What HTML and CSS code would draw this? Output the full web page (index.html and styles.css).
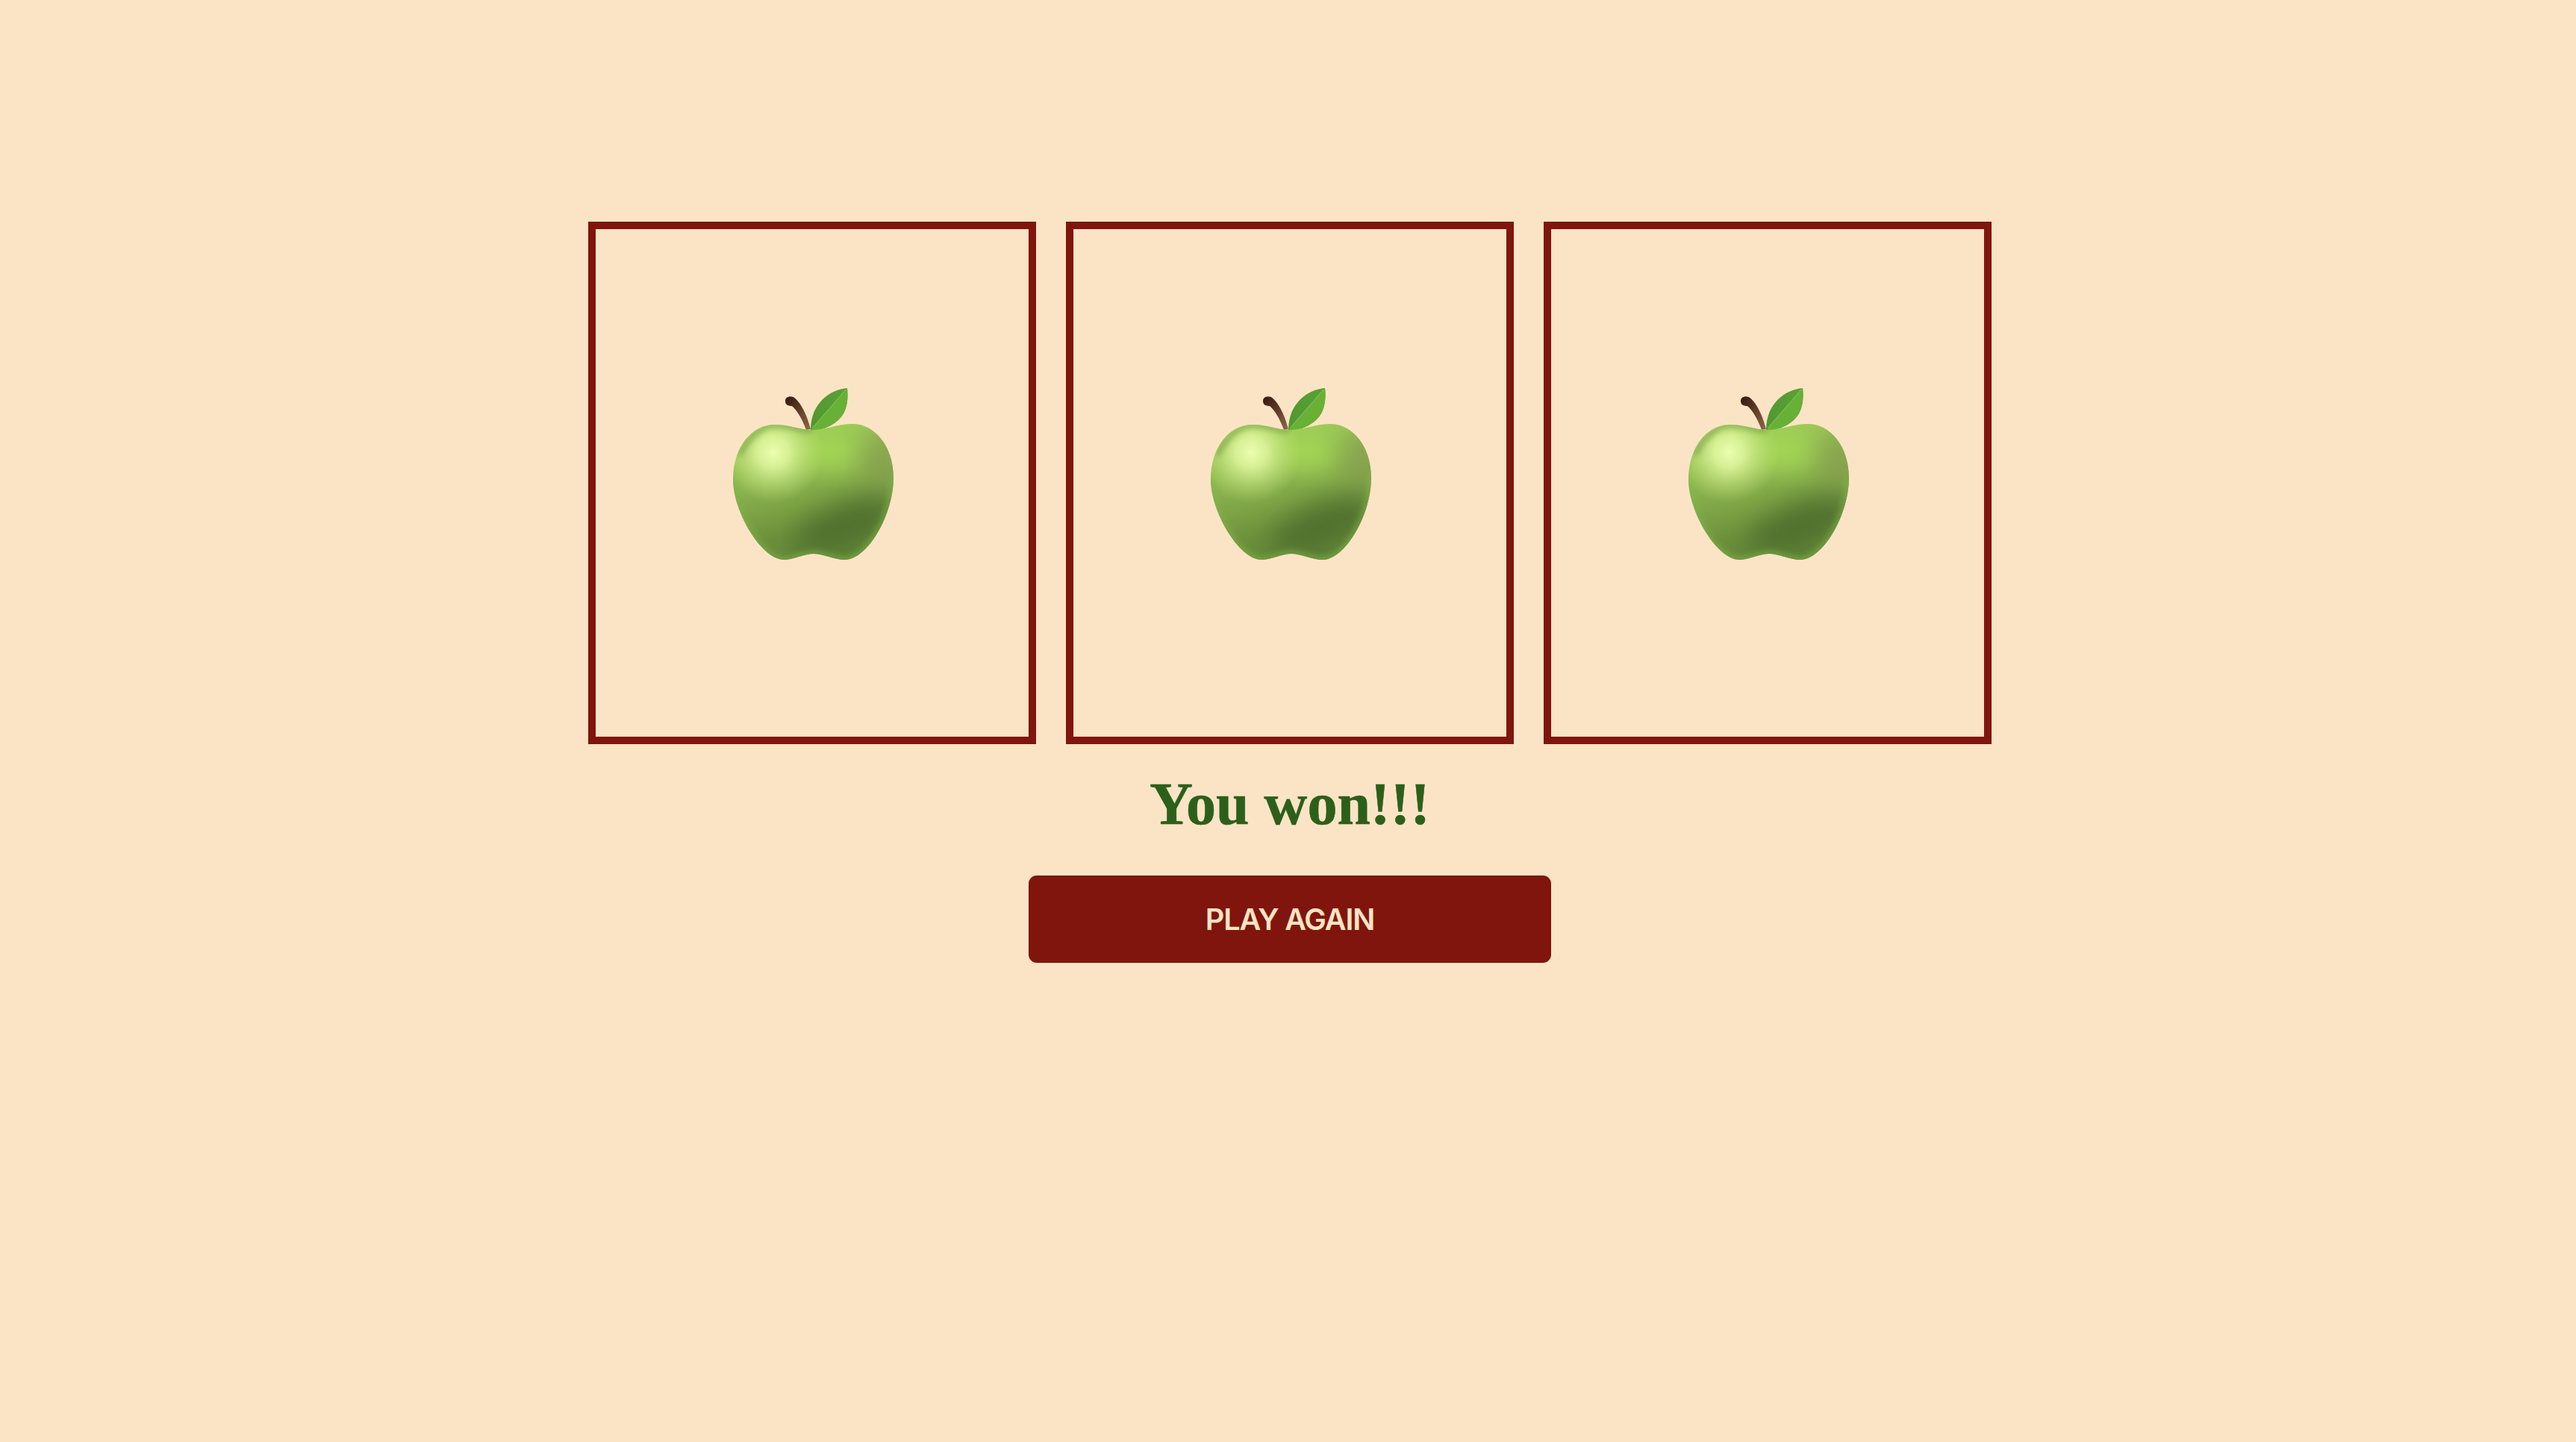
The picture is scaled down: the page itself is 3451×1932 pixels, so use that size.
FILE: index.html
```html
<!DOCTYPE html>
<html lang="en">
<head>
    <meta charset="UTF-8">
    <meta name="viewport" content="width=device-width, initial-scale=1.0">
    <title>Slot Machine</title>
    <link rel="stylesheet" href="styles.css">
</head>
<body>

    <div class="game">
        <div class="reels">
            <div class="reel">
                <svg class="fruit" viewBox="-2 7 280 280" role="img" aria-label="green apple">
                    <defs>
                        <clipPath id="appleClip">
                            <path d="M138 76C122 76 108 69 88 69C56 69 32 100 32 143C32 185 70 250 100 250C113 250 127 242 140 242C153 242 168 250 182 250C212 250 247 190 247 140C247 98 222 68 192 68C172 68 156 76 138 76Z"/>
                        </clipPath>
                        <linearGradient id="appleBase" x1="0.35" y1="0" x2="0.58" y2="1">
                            <stop offset="0" stop-color="#a4d25a"/>
                            <stop offset="0.35" stop-color="#8fb850"/>
                            <stop offset="0.75" stop-color="#6d913c"/>
                            <stop offset="1" stop-color="#5f8436"/>
                        </linearGradient>
                        <radialGradient id="appleShine" gradientUnits="userSpaceOnUse" cx="86" cy="106" r="68">
                            <stop offset="0" stop-color="#ecfdb0"/>
                            <stop offset="0.3" stop-color="#e2f8a0" stop-opacity="0.85"/>
                            <stop offset="1" stop-color="#c2e479" stop-opacity="0"/>
                        </radialGradient>
                        <linearGradient id="leafDark" x1="0" y1="1" x2="1" y2="0">
                            <stop offset="0" stop-color="#4f9830"/>
                            <stop offset="1" stop-color="#5aa034"/>
                        </linearGradient>
                        <linearGradient id="stemFill" x1="0" y1="0" x2="1" y2="1">
                            <stop offset="0" stop-color="#331a12"/>
                            <stop offset="0.35" stop-color="#54301f"/>
                            <stop offset="1" stop-color="#8e6a4c"/>
                        </linearGradient>
                        <filter id="soft" x="-60%" y="-80%" width="220%" height="260%">
                            <feGaussianBlur stdDeviation="18"/>
                        </filter>
                        <filter id="softEdge" x="-20%" y="-20%" width="140%" height="140%">
                            <feGaussianBlur stdDeviation="4"/>
                        </filter>
                        <g id="apple">
                            <path fill="url(#stemFill)" d="M102 37C102 32 108 30 113 32C122 38 131 55 136 75L130 76C125 62 118 50 111 44C105 44 102 42 102 37Z"/>
                            <path fill="url(#leafDark)" d="M185 20C162 22 136 40 136 76C152 78 172 68 180 54C186 43 186 30 185 20Z"/>
                            <path fill="#69b036" d="M185 20C172 36 155 54 136 76C152 78 172 68 180 54C186 43 186 30 185 20Z"/>
                            <path fill="none" stroke="#78ba4a" stroke-width="1.5" d="M183 22C170 38 154 55 139 73"/>
                            <g clip-path="url(#appleClip)">
                                <rect x="20" y="60" width="240" height="200" fill="url(#appleBase)"/>
                                <ellipse cx="160" cy="106" rx="44" ry="18" fill="#a8de54" filter="url(#soft)"/>
                                <ellipse cx="235" cy="120" rx="24" ry="42" fill="#87a050" filter="url(#soft)"/>
                                <ellipse cx="182" cy="205" rx="78" ry="30" fill="#4f6f2e" transform="rotate(-22 182 205)" filter="url(#soft)"/>
                                <rect x="20" y="60" width="240" height="200" fill="url(#appleShine)"/>
                                <path fill="none" stroke="#7fb548" stroke-width="5" filter="url(#softEdge)" d="M32 143C32 185 70 250 100 250C113 250 127 242 140 242C153 242 168 250 182 250C212 250 247 190 247 140"/>
                                <path fill="none" stroke="#7ba048" stroke-width="6" filter="url(#softEdge)" d="M40 110C56 78 75 69 88 69C108 69 122 76 138 76"/>
                            </g>
                        </g>
                    </defs>
                    <use href="#apple"/>
                </svg>
            </div>
            <div class="reel">
                <svg class="fruit" viewBox="-2 7 280 280" role="img" aria-label="green apple"><use href="#apple"/></svg>
            </div>
            <div class="reel">
                <svg class="fruit" viewBox="-2 7 280 280" role="img" aria-label="green apple"><use href="#apple"/></svg>
            </div>
        </div>
        <h1 class="result">You won!!!</h1>
        <button class="play-btn">PLAY AGAIN</button>
    </div>

</body>
</html>
```

FILE: styles.css
```css
body {
    background: #fbe4c5;
    margin: 0;
    height: 100vh;
    padding-left: 5px;
    box-sizing: border-box;
    display: flex;
    justify-content: center;
}

.game {
    display: flex;
    flex-direction: column;
    align-items: center;
    padding-top: 297px;
}

.reels {
    display: flex;
    gap: 40px;
}

.reel {
    width: 600px;
    height: 700px;
    box-sizing: border-box;
    border: 10px solid #80150d;
    display: flex;
    align-items: center;
    justify-content: center;
}

.fruit {
    width: 280px;
    height: 280px;
}

.result {
    margin: 35px 0 0;
    font-family: "Liberation Serif", "Times New Roman", serif;
    font-size: 80px;
    font-weight: bold;
    color: #2c601a;
    -webkit-text-stroke: 0.6px #2c601a;
}

.play-btn {
    margin-top: 50px;
    width: 700px;
    height: 117px;
    border: none;
    border-radius: 11px;
    background: #80150d;
    color: #fbe4c5;
    font-family: Inter, "Liberation Sans", sans-serif;
    font-size: 39.6px;
    font-weight: 600;
    letter-spacing: -1.1px;
    cursor: pointer;
}
```
